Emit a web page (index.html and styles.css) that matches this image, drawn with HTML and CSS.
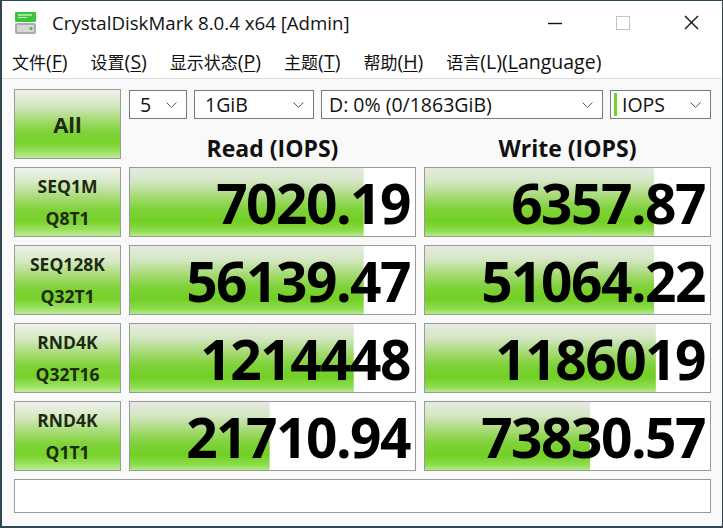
FILE: index.html
```html
<!DOCTYPE html>
<html>

<head>
    <title>CrystalDiskMark 8.0.4 x64 [Admin]</title>
    <link rel="stylesheet" href="styles.css">
</head>

<body>
    <div class="window">
        <div class="titlebar">
            <svg class="app-icon" width="24" height="24" viewBox="0 0 24 24">
                <rect x="1" y="1" width="21" height="10" rx="1" fill="#3ec43a" />
                <rect x="4" y="3" width="14" height="2" fill="#9be89a" />
                <rect x="4" y="6" width="9" height="1" fill="#c6f2c4" />
                <rect x="1" y="12" width="21" height="11" rx="2" fill="#a9adad" />
                <rect x="3" y="14" width="17" height="7" rx="1" fill="#d6d8d8" />
                <circle cx="17" cy="17.5" r="1.6" fill="#4cb84a" />
            </svg>
            <span class="title">CrystalDiskMark 8.0.4 x64 [Admin]</span>
            <div class="controls">
                <span class="ctl">
                    <svg width="14" height="14" viewBox="0 0 14 14"><line x1="0" y1="7.5" x2="14" y2="7.5" stroke="#111" stroke-width="1.4" /></svg>
                </span>
                <span class="ctl">
                    <svg width="14" height="14" viewBox="0 0 14 14"><rect x="0.5" y="0.5" width="13" height="13" fill="none" stroke="#c4c4c4" stroke-width="1" /></svg>
                </span>
                <span class="ctl">
                    <svg width="15" height="15" viewBox="0 0 15 15"><path d="M1 1 L14 14 M14 1 L1 14" stroke="#111" stroke-width="1.4" fill="none" /></svg>
                </span>
            </div>
        </div>

        <div class="menubar">
            <span class="menu-item">文件<span class="key">(<u>F</u>)</span></span>
            <span class="menu-item">设置<span class="key">(<u>S</u>)</span></span>
            <span class="menu-item">显示状态<span class="key">(<u>P</u>)</span></span>
            <span class="menu-item">主题<span class="key">(<u>T</u>)</span></span>
            <span class="menu-item">帮助<span class="key">(<u>H</u>)</span></span>
            <span class="menu-item">语言<span class="key">(L)(<u>L</u>anguage)</span></span>
        </div>

        <div class="main">
            <div class="green-btn all-btn">All</div>

            <div class="settings">
                <div class="combos">
                    <div class="combo combo-count"><span>5</span><svg class="chev" width="11" height="6" viewBox="0 0 11 6"><path d="M0.5 0.5 L5.5 5.3 L10.5 0.5" stroke="#555" fill="none" /></svg></div>
                    <div class="combo combo-size"><span>1GiB</span><svg class="chev" width="11" height="6" viewBox="0 0 11 6"><path d="M0.5 0.5 L5.5 5.3 L10.5 0.5" stroke="#555" fill="none" /></svg></div>
                    <div class="combo combo-drive"><span>D: 0% (0/1863GiB)</span><svg class="chev" width="11" height="6" viewBox="0 0 11 6"><path d="M0.5 0.5 L5.5 5.3 L10.5 0.5" stroke="#555" fill="none" /></svg></div>
                    <div class="combo combo-unit"><span class="unit-mark"></span><span>IOPS</span><svg class="chev" width="11" height="6" viewBox="0 0 11 6"><path d="M0.5 0.5 L5.5 5.3 L10.5 0.5" stroke="#555" fill="none" /></svg></div>
                </div>
                <div class="heads">
                    <span class="head">Read (IOPS)</span>
                    <span class="head">Write (IOPS)</span>
                </div>
            </div>

            <div class="green-btn test-btn"><span>SEQ1M</span><span>Q8T1</span></div>
            <div class="result" style="background-size: 82% 100%">7020.19</div>
            <div class="result" style="background-size: 80.5% 100%">6357.87</div>

            <div class="green-btn test-btn"><span>SEQ128K</span><span>Q32T1</span></div>
            <div class="result" style="background-size: 82% 100%">56139.47</div>
            <div class="result" style="background-size: 80.5% 100%">51064.22</div>

            <div class="green-btn test-btn"><span>RND4K</span><span>Q32T16</span></div>
            <div class="result" style="background-size: 78.5% 100%">1214448</div>
            <div class="result" style="background-size: 81% 100%">1186019</div>

            <div class="green-btn test-btn"><span>RND4K</span><span>Q1T1</span></div>
            <div class="result" style="background-size: 49% 100%">21710.94</div>
            <div class="result" style="background-size: 58% 100%">73830.57</div>

            <div class="comment"></div>
        </div>
    </div>
</body>

</html>
```

FILE: styles.css
```css
body {
    margin: 0;
    font-family: "Open Sans", "Noto Sans CJK SC", sans-serif;
    color: #111;
}

.window {
    width: 723px;
    height: 528px;
    box-sizing: border-box;
    border: 1px solid #2f4752;
    border-left-width: 2px;
    border-bottom-width: 2px;
    background: #f9f9f9;
    overflow: hidden;
}

.titlebar {
    display: flex;
    align-items: center;
    height: 43px;
    background: #fff;
    padding-left: 12px;
}

.app-icon {
    flex: none;
}

.title {
    margin-left: 14px;
    font-size: 18.7px;
    color: #111;
}

.controls {
    display: flex;
    margin-left: auto;
    margin-right: -3px;
    height: 100%;
}

.ctl {
    display: flex;
    align-items: center;
    justify-content: center;
    width: 68px;
    height: 100%;
}

.menubar {
    display: flex;
    align-items: center;
    height: 34px;
    background: #fff;
    border-bottom: 1px solid #dcdcdc;
    padding-left: 10px;
    font-family: "Noto Sans CJK SC", sans-serif;
    font-size: 17px;
}

.menu-item {
    margin-right: 23px;
}

.key {
    font-family: "Open Sans", "Noto Sans CJK SC", sans-serif;
    font-size: 19.5px;
}

.key u {
    text-underline-offset: 2px;
}

.main {
    display: grid;
    grid-template-columns: 107px 287px 287px;
    grid-template-rows: 70px 70px 70px 70px 70px 34px;
    gap: 8px;
    padding: 10px 0 0 12px;
}

.green-btn {
    display: flex;
    flex-direction: column;
    align-items: center;
    justify-content: center;
    box-sizing: border-box;
    border: 1px solid #9a9a9a;
    background: linear-gradient(#eef2ea 0%, #d6e8c4 22%, #a4da70 45%, #7fd238 62%, #77d22a 78%, #9ee266 92%, #bfeb9a 100%);
    font-weight: 700;
    color: #1d2a12;
}

.all-btn {
    font-size: 22px;
}

.test-btn {
    font-size: 17.5px;
    line-height: 32px;
}

.settings {
    grid-column: 2 / 4;
    display: flex;
    flex-direction: column;
}

.combos {
    display: flex;
    gap: 7px;
    height: 34px;
    margin-top: 1px;
}

.combo {
    display: flex;
    align-items: center;
    box-sizing: border-box;
    border: 1px solid #7a7a7a;
    background: #fff;
    padding: 0 9px 0 10px;
    font-size: 19.5px;
    color: #111;
}

.combo .chev {
    margin-left: auto;
    flex: none;
}

.combo-count {
    width: 58px;
}

.combo-size {
    width: 120px;
}

.combo-drive {
    flex: 1;
    padding-left: 7px;
}

.combo-unit {
    width: 101px;
    padding-left: 3px;
}

.unit-mark {
    width: 3px;
    height: 23px;
    background: #6fd32a;
    margin-right: 5px;
}

.heads {
    display: grid;
    grid-template-columns: 287px 287px;
    gap: 8px;
    padding-top: 14px;
}

.head {
    text-align: center;
    font-size: 23px;
    font-weight: 700;
    line-height: 30px;
    color: #111;
}

.result {
    display: flex;
    align-items: center;
    justify-content: flex-end;
    box-sizing: border-box;
    border: 1px solid #9a9a9a;
    padding-right: 5px;
    background-color: #fff;
    background-image: linear-gradient(#e6ebe2 0%, #d4e6c4 20%, #a6da74 42%, #80d23a 60%, #72cf24 78%, #8ddc4c 92%, #b4e98a 100%);
    background-repeat: no-repeat;
    font-size: 55px;
    font-weight: 700;
    line-height: 1;
    color: #000;
    letter-spacing: -1.5px;
}

.comment {
    grid-column: 1 / 4;
    box-sizing: border-box;
    border: 1px solid #9a9a9a;
    background: #fff;
}
```
